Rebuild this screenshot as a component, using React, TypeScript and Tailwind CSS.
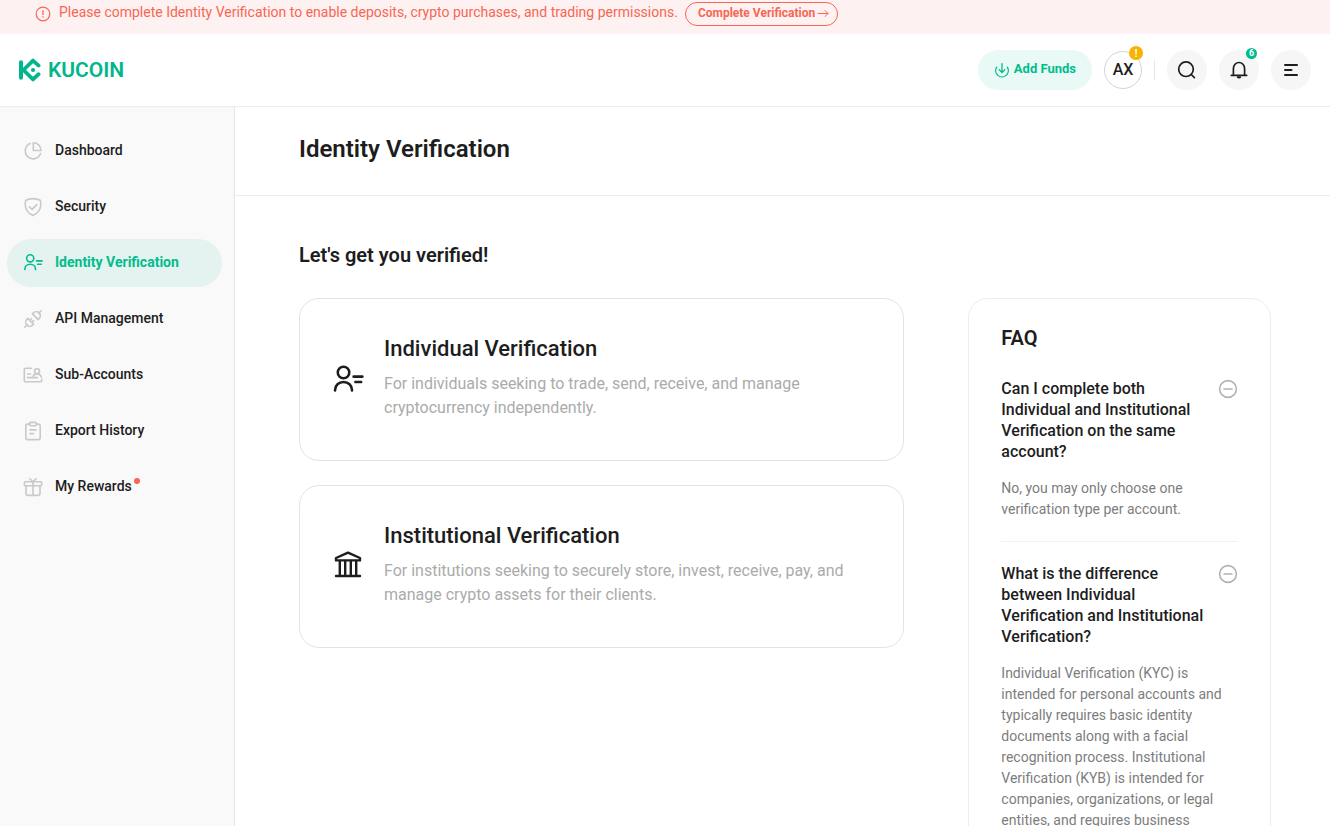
import type { ReactNode } from "react";

type IconProps = { className?: string };

function Svg({ className, width = 1.6, children, box = 20 }: IconProps & { width?: number; box?: number; children: ReactNode }) {
  return (
    <svg
      className={className}
      viewBox={`0 0 ${box} ${box}`}
      fill="none"
      stroke="currentColor"
      strokeWidth={width}
      strokeLinecap="round"
      strokeLinejoin="round"
      aria-hidden="true"
    >
      {children}
    </svg>
  );
}

const DashboardIcon = (p: IconProps) => (
  <Svg {...p}>
    <path d="M7.2 2.6A7.9 7.9 0 1 0 17.6 12.6" />
    <path d="M10.3 1.8V9.5H18A7.7 7.7 0 0 0 10.3 1.8Z" />
  </Svg>
);

const SecurityIcon = (p: IconProps) => (
  <Svg {...p}>
    <path d="M10 1.6C12.4 1.6 15.2 2.3 17.3 3.2C18.6 9.4 17.4 15.3 10 18.4C2.6 15.3 1.4 9.4 2.7 3.2C4.8 2.3 7.6 1.6 10 1.6Z" />
    <path d="M6.4 9.9L9.1 12.4L13.7 7.6" />
  </Svg>
);

const IdentityIcon = (p: IconProps) => (
  <Svg {...p}>
    <circle cx="7.2" cy="5.3" r="3.6" />
    <path d="M1.9 16.6V16.3C1.9 13.3 4.2 11.3 7.2 11.3S12.5 13.3 12.5 16.3V16.6" />
    <path d="M13.5 7.9H19M14.6 11.3H18.2" />
  </Svg>
);

const ApiIcon = (p: IconProps) => (
  <Svg {...p} width={1.6}>
    <path d="M1.8 18.2L4.4 15.6M18.2 1.8L15.6 4.4" />
    <path d="M4.9 9.4L10.6 15.1L9.5 16.2A3.9 3.9 0 0 1 3.9 10.4Z" />
    <path d="M9.5 4.9L15.2 10.6L16.2 9.5A3.9 3.9 0 0 0 10.5 3.9Z" />
    <path d="M6.8 11.2L8.5 9.5M8.9 13.3L10.6 11.6" />
  </Svg>
);

const SubAccountsIcon = (p: IconProps) => (
  <Svg {...p}>
    <path d="M8.5 3.2H2.7A1.4 1.4 0 0 0 1.3 4.6V15.4A1.4 1.4 0 0 0 2.7 16.8H17.4A1.4 1.4 0 0 0 18.7 15.4V14.4" />
    <circle cx="14" cy="6.2" r="2.5" />
    <path d="M10.1 12.2C10.4 10 12 8.9 14 8.9S17.8 10 18.3 12.2" />
    <path d="M4.4 9H7.4M4.4 12.6H14.4" />
  </Svg>
);

const ExportIcon = (p: IconProps) => (
  <Svg {...p}>
    <path d="M6.6 3.1H4.6A1.8 1.8 0 0 0 2.8 4.9V16.8A1.8 1.8 0 0 0 4.6 18.6H15.4A1.8 1.8 0 0 0 17.2 16.8V4.9A1.8 1.8 0 0 0 15.4 3.1H13.4" />
    <rect x="6.6" y="1.4" width="6.8" height="3.3" rx="1.2" />
    <path d="M7 8.9H13M7 12.6H10.6" />
  </Svg>
);

const GiftIcon = (p: IconProps) => (
  <Svg {...p}>
    <rect x="1.4" y="4.8" width="17.2" height="3.9" rx="0.8" />
    <path d="M3 8.7V16.8A1.6 1.6 0 0 0 4.6 18.4H15.4A1.6 1.6 0 0 0 17 16.8V8.7M10 4.8V18.4M10 4.8L6.8 1.7M10 4.8L13.2 1.7" />
  </Svg>
);

const BankIcon = (p: IconProps) => (
  <Svg {...p} box={32} width={2.4}>
    <path d="M4 7L16 1.6L28 7V9.4H4ZM4 25H28M7.8 9.4V25M24.2 9.4V25M13.2 9.4V25M18.8 9.4V25" />
  </Svg>
);

const LogoMark = () => (
  <svg className="h-6 w-[23px]" viewBox="0 0 23 24" fill="none" stroke="currentColor" strokeWidth="4" strokeLinecap="round" strokeLinejoin="round" aria-hidden="true">
    <path d="M3 4.2V19.8" />
    <path d="M20.6 7.6L15 2.6L5.4 12L15 21.4L20.6 16.2" strokeWidth="3.8" />
    <circle cx="15" cy="12" r="2.1" fill="currentColor" stroke="none" />
  </svg>
);

const MinusCircle = () => (
  <Svg className="mt-px size-5 shrink-0 text-[#b3b3b3]" width={1.6}>
    <circle cx="10" cy="10" r="8.4" />
    <path d="M6 10H14" />
  </Svg>
);

const navItems = [
  { label: "Dashboard", Icon: DashboardIcon },
  { label: "Security", Icon: SecurityIcon },
  { label: "Identity Verification", Icon: IdentityIcon, active: true },
  { label: "API Management", Icon: ApiIcon },
  { label: "Sub-Accounts", Icon: SubAccountsIcon },
  { label: "Export History", Icon: ExportIcon },
  { label: "My Rewards", Icon: GiftIcon, dot: true },
];

const options = [
  {
    title: "Individual Verification",
    text: "For individuals seeking to trade, send, receive, and manage cryptocurrency independently.",
    Icon: IdentityIcon,
  },
  {
    title: "Institutional Verification",
    text: "For institutions seeking to securely store, invest, receive, pay, and manage crypto assets for their clients.",
    Icon: BankIcon,
  },
];

const faqs = [
  {
    q: "Can I complete both Individual and Institutional Verification on the same account?",
    a: "No, you may only choose one verification type per account.",
  },
  {
    q: "What is the difference between Individual Verification and Institutional Verification?",
    a: "Individual Verification (KYC) is intended for personal accounts and typically requires basic identity documents along with a facial recognition process. Institutional Verification (KYB) is intended for companies, organizations, or legal entities, and requires business",
  },
];

function Banner() {
  return (
    <div className="flex shrink-0 items-center bg-[#fef1f1] pt-0.5 pb-2 pl-[35px] text-[#f66754]">
      <svg className="mr-2 size-4" viewBox="0 0 16 16" fill="none" stroke="currentColor" aria-hidden="true">
        <circle cx="8" cy="8" r="6.8" strokeWidth="1.2" />
        <path d="M8 4.3V9M8 10.2V11.6" strokeWidth="1.3" />
      </svg>
      <p className="pb-1 text-sm leading-5">
        Please complete Identity Verification to enable deposits, crypto purchases, and trading permissions.
      </p>
      <button className="ml-[7px] flex h-6 items-center gap-0.5 rounded-full border border-[#f66754] pr-2 pb-0.5 pl-3 text-xs font-bold">
        Complete Verification
        <Svg className="size-3" box={12} width={1}>
          <path d="M1 6.5H11M8 3.5L11 6.5L8 9.5" />
        </Svg>
      </button>
    </div>
  );
}

function Header() {
  return (
    <header className="flex h-[73px] shrink-0 items-center justify-between border-b border-[#ececec] pr-[19px] pl-[18px]">
      <a href="#" className="flex items-center gap-[7px] text-[#01b68c]">
        <LogoMark />
        <span className="pt-0.5 text-[21px] font-semibold">KUCOIN</span>
      </a>
      <div className="flex items-center gap-3">
        <button className="flex h-10 items-center gap-1 rounded-full bg-[#e9f9f6] px-4 text-[13px] font-bold text-[#01bc8d]">
          <Svg className="size-4" box={16} width={1.3}>
            <path d="M2.7 5.2A6.3 6.3 0 1 0 13.3 5.2M8 1.6V10.4M5.2 7.8L8 10.5L10.8 7.8" />
          </Svg>
          <span className="pb-0.5">Add Funds</span>
        </button>
        <button className="relative flex size-[38px] items-center justify-center rounded-full border border-[#d4d4d4] text-base font-medium text-[#1d1d1d]">
          AX
          <span className="absolute -top-1.5 -right-0.5 flex size-3.5 items-center justify-center rounded-full bg-[#f8b200] text-[10px] font-bold text-white">
            !
          </span>
        </button>
        <span className="h-5 w-px bg-[#e8e8e8]" />
        <button aria-label="Search" className="flex size-10 items-center justify-center rounded-full bg-[#f6f6f6]">
          <Svg className="size-5" width={1.7}>
            <circle cx="9" cy="9.2" r="7.3" />
            <path d="M14.3 14.5L17.4 17.6" />
          </Svg>
        </button>
        <button aria-label="Notifications" className="relative flex size-10 items-center justify-center rounded-full bg-[#f6f6f6]">
          <Svg className="size-5" width={1.7}>
            <path d="M4.4 15.3V8.4A5.6 5.9 0 0 1 15.6 8.4V15.3M2.3 15.3H17.7" />
            <path d="M8.6 17.1A1.6 1.3 0 0 0 11.4 17.1Z" fill="currentColor" />
          </Svg>
          <span className="absolute -top-0.5 right-0.5 flex size-[11px] items-center justify-center rounded-full bg-[#01bc8d] text-[9px] font-bold text-white">
            6
          </span>
        </button>
        <button aria-label="Menu" className="flex size-10 items-center justify-center rounded-full bg-[#f6f6f6]">
          <Svg className="size-5" width={2}>
            <path d="M4 5H16M4 10H10.5M4 15H16" />
          </Svg>
        </button>
      </div>
    </header>
  );
}

function Sidebar() {
  return (
    <nav className="flex w-[235px] shrink-0 flex-col gap-2 border-r border-[#e6e6e6] bg-[#f9f9f9] pt-5 pr-3 pl-[7px]">
      {navItems.map(({ label, Icon, active, dot }) => (
        <a
          key={label}
          href="#"
          className={
            active
              ? "flex h-12 items-center gap-3 rounded-full bg-[#e4f3f0] px-4 text-sm font-bold text-[#01bc8d]"
              : "flex h-12 items-center gap-3 rounded-full px-4 text-sm font-medium text-[#1d1d1d]"
          }
        >
          <Icon className={active ? "size-5" : "size-5 text-[#c9c9c9]"} />
          <span className="relative pb-0.5">
            {label}
            {dot && <span className="absolute top-0.5 -right-2 size-1.5 rounded-full bg-[#f66754]" />}
          </span>
        </a>
      ))}
    </nav>
  );
}

export default function App() {
  return (
    <div className="flex h-screen flex-col overflow-hidden bg-white font-['Roboto',sans-serif] text-[#1d1d1d]">
      <Banner />
      <Header />
      <div className="flex min-h-0 flex-1">
        <Sidebar />
        <main className="min-w-0 flex-1 overflow-hidden">
          <div className="border-b border-[#ececec] px-16 pt-[26px] pb-[30px]">
            <h1 className="text-2xl font-semibold">Identity Verification</h1>
          </div>
          <div className="pt-[45px] pr-[59px] pl-16">
            <h2 className="text-xl leading-7 font-semibold">Let's get you verified!</h2>
            <div className="mt-[29px] grid grid-cols-[2fr_1fr] items-start gap-16">
              <div className="flex flex-col gap-6">
                {options.map(({ title, text, Icon }) => (
                  <button
                    key={title}
                    className="flex items-center gap-5 rounded-[20px] border border-[#e3e3e3] px-8 text-left"
                  >
                    <Icon className="size-8 shrink-0" />
                    <span className="block pt-9 pb-10">
                      <span className="block text-[22px] leading-7 font-medium">{title}</span>
                      <span className="mt-[9px] block text-base leading-6 text-[#ababab]">{text}</span>
                    </span>
                  </button>
                ))}
              </div>
              <aside className="rounded-[20px] border border-[#ececec] px-8 pt-[27px] pb-8">
                <h2 className="mb-7 text-xl leading-6 font-semibold">FAQ</h2>
                <div className="flex flex-col gap-[21px] divide-y divide-[#f1f1f1]">
                  {faqs.map(({ q, a }) => (
                    <section key={q} className="pb-[21px]">
                      <button className="flex w-full items-start gap-3 text-left text-base leading-[21px] font-medium">
                        <span className="flex-1">{q}</span>
                        <MinusCircle />
                      </button>
                      <p className="mt-4 text-sm leading-[21px] text-[#7d7d7d]">{a}</p>
                    </section>
                  ))}
                </div>
              </aside>
            </div>
          </div>
        </main>
      </div>
    </div>
  );
}
